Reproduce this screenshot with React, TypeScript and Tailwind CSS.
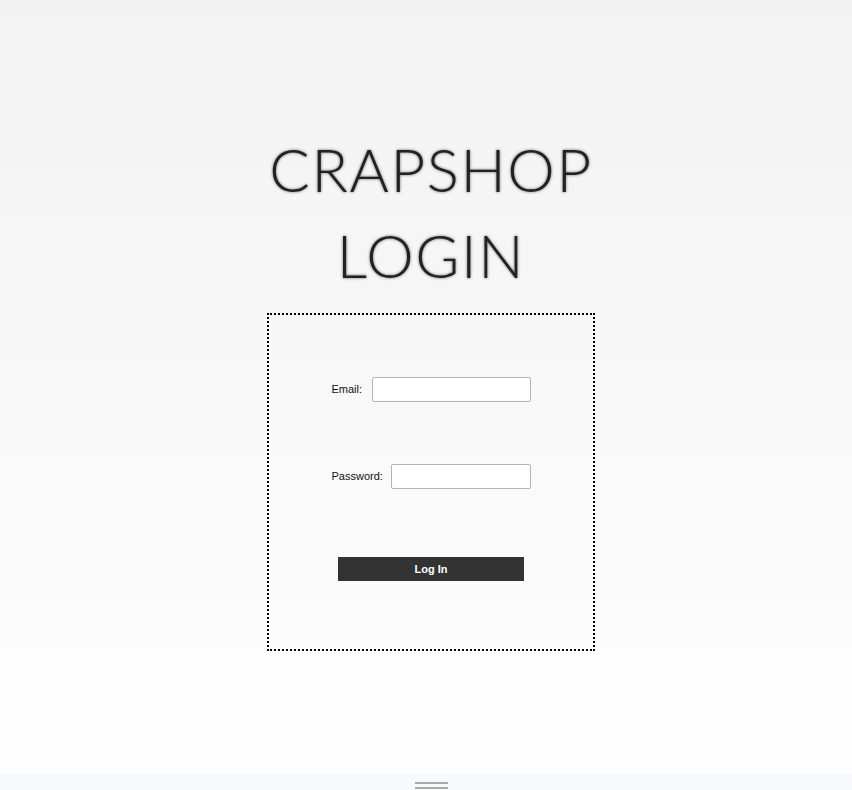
export default function App() {
  return (
    <div className="flex h-[790px] flex-col pl-[10px] font-['Liberation_Sans',Arial,sans-serif] bg-[#f8f9fc]">
      <main className="-ml-[10px] flex flex-1 flex-col items-center bg-linear-to-b from-[#f2f2f2] to-[#fefefe] pl-[10px]">
        <h1 className="mt-[126px] text-center font-['Lato',sans-serif] text-[60px] font-light leading-[86px] tracking-[1.6px] text-[#222] [text-shadow:0_0_3px_rgba(0,0,0,0.6)]">
          CRAPSHOP
          <br />
          LOGIN
        </h1>

        <form className="mt-[15px] flex h-[338px] w-[328px] flex-col items-center border-2 border-dotted border-black pt-[62px]">
          <div className="flex w-[199px] items-center justify-between">
            <label className="text-[11px] text-[#111]">Email:</label>
            <input type="email" className="h-[25px] w-[159px] rounded-[2px] border border-[#b4b4b4] bg-white" />
          </div>
          <div className="mt-[62px] flex w-[199px] items-center justify-between">
            <label className="text-[11px] text-[#111]">Password:</label>
            <input type="password" className="h-[25px] w-[140px] rounded-[2px] border border-[#b4b4b4] bg-white" />
          </div>
          <button type="button" className="mt-[68px] h-[24px] w-[186px] bg-[#333] text-[11px] font-bold text-white">
            Log In
          </button>
        </form>
      </main>

      <div className="flex h-[17px] flex-col items-center pt-[9px]">
        <div className="h-[2px] w-[33px] bg-[#aaa]" />
        <div className="mt-[3px] h-[2px] w-[33px] bg-[#aaa]" />
      </div>
    </div>
  );
}
